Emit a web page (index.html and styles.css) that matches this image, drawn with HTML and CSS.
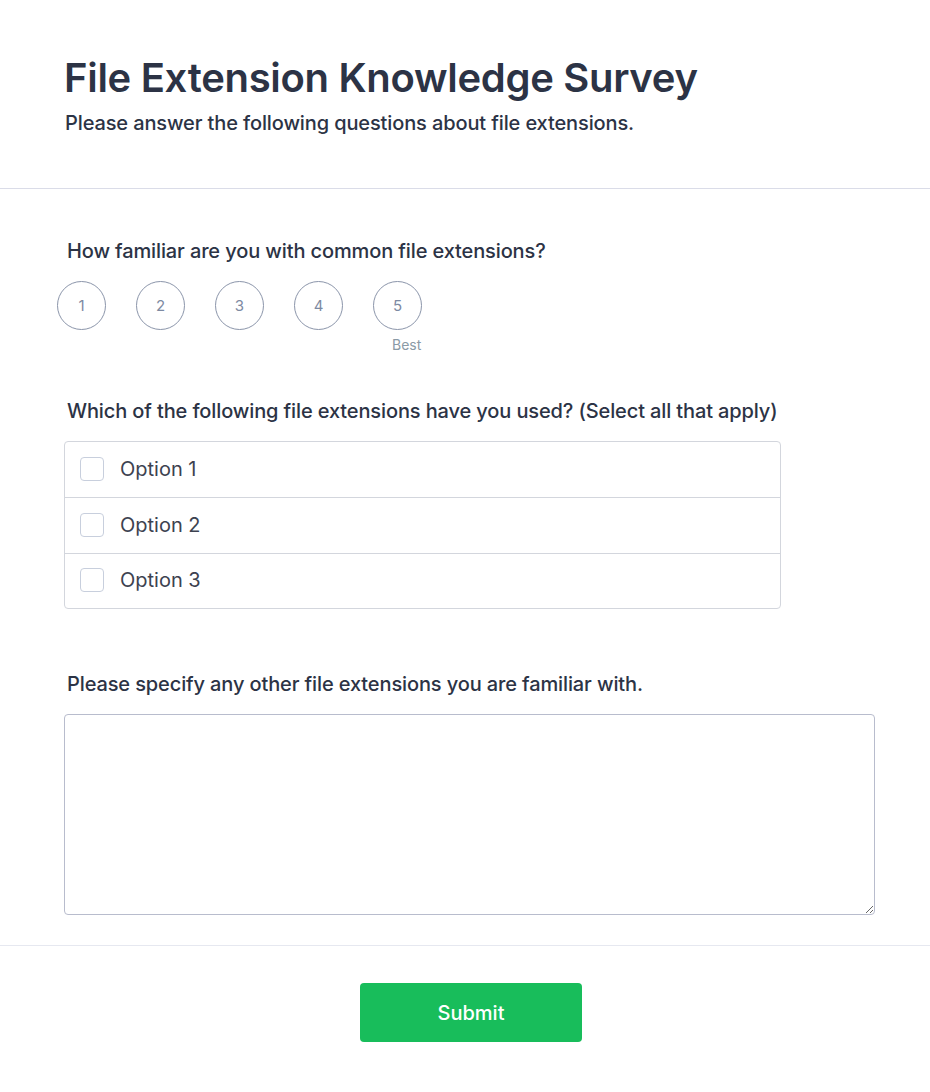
FILE: index.html
```html
<!DOCTYPE html>
<html lang="en">
<head>
<meta charset="utf-8">
<title>File Extension Knowledge Survey</title>
<link rel="stylesheet" href="styles.css">
</head>
<body>
<header class="header">
  <h1 class="title">File Extension Knowledge Survey</h1>
  <p class="subtitle">Please answer the following questions about file extensions.</p>
</header>
<main class="form">
  <section class="question q-rating">
    <label class="q-label">How familiar are you with common file extensions?</label>
    <div class="rating">
      <div class="rate-item"><span class="circle">1</span></div>
      <div class="rate-item"><span class="circle">2</span></div>
      <div class="rate-item"><span class="circle">3</span></div>
      <div class="rate-item"><span class="circle">4</span></div>
      <div class="rate-item"><span class="circle">5</span><span class="rate-note">Best</span></div>
    </div>
  </section>
  <section class="question q-check">
    <label class="q-label">Which of the following file extensions have you used? (Select all that apply)</label>
    <div class="options">
      <div class="option"><span class="box"></span><span class="opt-text">Option 1</span></div>
      <div class="option"><span class="box"></span><span class="opt-text">Option 2</span></div>
      <div class="option"><span class="box"></span><span class="opt-text">Option 3</span></div>
    </div>
  </section>
  <section class="question q-text">
    <label class="q-label">Please specify any other file extensions you are familiar with.</label>
    <textarea class="textarea"></textarea>
  </section>
</main>
<footer class="footer">
  <button class="submit" type="button">Submit</button>
</footer>
</body>
</html>
```

FILE: styles.css
```css
* { box-sizing: border-box; }
html, body { margin: 0; padding: 0; background: #fff; }
body {
  font-family: Inter, "Noto Sans", "Liberation Sans", sans-serif;
  color: #2c3345;
  width: 930px;
}
.header {
  padding: 54px 64px 0 64px;
  height: 189px;
  border-bottom: 1px solid #dadce8;
}
.title {
  margin: 0;
  font-size: 40px;
  line-height: 48px;
  font-weight: 600;
  color: #2c3345;
  letter-spacing: -0.3px;
}
.subtitle {
  margin: 9px 0 0 1px;
  font-size: 20px;
  line-height: 24px;
  font-weight: 500;
  color: #2c3345;
  letter-spacing: -0.12px;
}
.form {
  padding: 0 55px 0 64px;
}
.question {
  display: flex;
  flex-direction: column;
}
.q-label {
  display: block;
  font-size: 20px;
  line-height: 24px;
  font-weight: 500;
  color: #2c3345;
  padding-left: 3px;
  letter-spacing: -0.12px;
}
.q-rating { padding-top: 50px; }
.rating {
  display: flex;
  gap: 30px;
  margin-top: 18px;
  margin-left: -7px;
}
.rate-item {
  display: flex;
  flex-direction: column;
  align-items: center;
  width: 49px;
  position: relative;
}
.circle {
  width: 49px;
  height: 49px;
  border: 1px solid #8b95aa;
  border-radius: 50%;
  display: flex;
  align-items: center;
  justify-content: center;
  font-size: 15px;
  color: #7d8aa2;
}
.rate-note {
  position: absolute;
  top: 55px;
  left: 19px;
  font-size: 14px;
  line-height: 18px;
  color: #8a9aa6;
}
.q-check { padding-top: 69px; }
.options {
  margin-top: 18px;
  width: 717px;
  border: 1px solid #d3d6dd;
  border-radius: 4px;
}
.option {
  display: flex;
  align-items: center;
  height: 56px;
  padding-left: 15px;
  padding-bottom: 2px;
  border-bottom: 1px solid #d3d6dd;
}
.option:last-child { border-bottom: none; height: 54px; }
.box {
  width: 24px;
  height: 24px;
  border: 1px solid #c8cfdd;
  border-radius: 4px;
  background: #fff;
}
.opt-text {
  margin-left: 16px;
  font-size: 20px;
  font-weight: 400;
  color: #3d4250;
}
.q-text { padding-top: 63px; }
.textarea {
  margin-top: 18px;
  width: 811px;
  height: 201px;
  border: 1px solid #b8bccd;
  border-radius: 4px;
  resize: vertical;
  font-family: inherit;
}
.footer {
  margin-top: 30px;
  border-top: 1px solid #e6e8f0;
  display: flex;
  justify-content: center;
  padding: 37px 0 50px 12px;
}
.submit {
  width: 222px;
  height: 59px;
  background: #18bd5b;
  border: none;
  border-radius: 4px;
  color: #fff;
  font-family: inherit;
  font-size: 20px;
  font-weight: 500;
}
```
